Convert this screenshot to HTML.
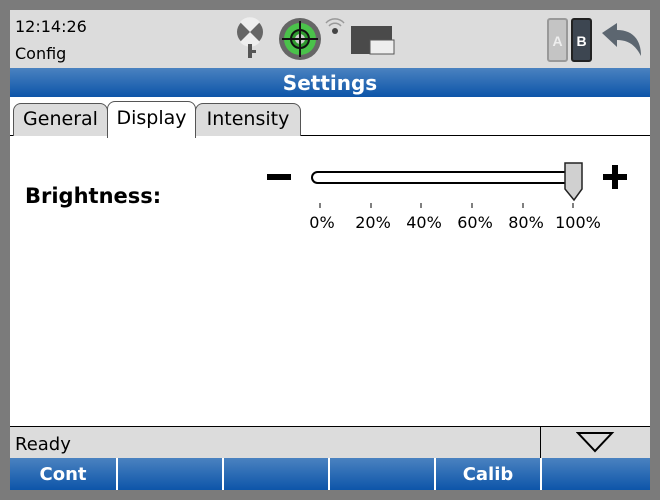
<!DOCTYPE html>
<html><head><style>
body{margin:0;width:660px;height:500px;background:#7b7b7b;position:relative;overflow:hidden;font-family:"DejaVu Sans","Liberation Sans",sans-serif}
.a{position:absolute}
.blue{background:linear-gradient(#4a82c0,#0d55a9)}
</style></head><body>
<div class="a" style="left:10px;top:10px;width:640px;height:480px;background:#fff"></div>
<div class="a" style="left:10px;top:10px;width:640px;height:58px;background:#dcdcdc"></div>
<div class="a" style="left:15px;top:17px;font-size:16px;color:#000">12:14:26</div>
<div class="a" style="left:15px;top:44px;font-size:16px;color:#000">Config</div>
<svg class="a" style="left:230px;top:14px" width="170" height="50">
<circle cx="20" cy="18" r="13" fill="#666"/><path d="M20 18 L10 8 A13 13 0 0 1 30 8 Z M20 18 L10 28 A13 13 0 0 0 30 28Z" fill="#eee"/>
<rect x="18" y="30" width="4" height="14" fill="#555"/><rect x="22" y="36" width="4" height="3" fill="#555"/>
<circle cx="70" cy="25" r="21" fill="#666"/><circle cx="70" cy="25" r="16" fill="#4ac24a"/><circle cx="70" cy="25" r="9" fill="#2f9a2f" stroke="#111" stroke-width="2"/><circle cx="70" cy="25" r="5" fill="#ccc"/>
<path d="M70 7V43M52 25H88" stroke="#111" stroke-width="2"/>
<circle cx="105" cy="17" r="3" fill="#444"/><path d="M99 12a8 8 0 0 1 12 0M96 9a12 12 0 0 1 18 0" stroke="#999" fill="none" stroke-width="1.5"/>
<rect x="121" y="12" width="41" height="28" fill="#4a4a4a"/><rect x="140" y="26" width="24" height="14" fill="#eee" stroke="#555"/>
</svg>
<svg class="a" style="left:545px;top:16px" width="100" height="48">
<rect x="3" y="3" width="19" height="42" rx="2" fill="#c4c4c4" stroke="#999" stroke-width="2"/><text x="12.5" y="30" font-size="14" fill="#eee" text-anchor="middle" font-family="Liberation Sans" font-weight="bold">A</text>
<rect x="27" y="3" width="19" height="42" rx="2" fill="#3d4651" stroke="#222" stroke-width="2"/><text x="36.5" y="30" font-size="14" fill="#fff" text-anchor="middle" font-family="Liberation Sans" font-weight="bold">B</text>
<path d="M57 17 L72 7 L72 14 C88 14 96 24 96 40 C90 28 82 24 72 24 L72 31 Z" fill="#5c6670"/>
</svg>
<div class="a blue" style="left:10px;top:68px;width:640px;height:29px"></div>
<div class="a" style="left:10px;top:71px;width:640px;text-align:center;color:#fff;font-weight:bold;font-size:20px;font-family:'DejaVu Sans',sans-serif">Settings</div>
<div class="a" style="left:10px;top:135px;width:640px;height:1px;background:#000"></div>
<div class="a" style="left:13px;top:103px;width:93px;height:32px;background:#dcdcdc;border:1px solid #555;border-bottom:none;border-radius:8px 8px 0 0;font-size:19px;text-align:center;line-height:31px">General</div>
<div class="a" style="left:195px;top:103px;width:104px;height:32px;background:#dcdcdc;border:1px solid #555;border-bottom:none;border-radius:8px 8px 0 0;font-size:19px;text-align:center;line-height:31px">Intensity</div>
<div class="a" style="left:107px;top:101px;width:87px;height:36px;background:#fff;border:1px solid #555;border-bottom:none;border-radius:8px 8px 0 0;font-size:19px;text-align:center;line-height:33px">Display</div>
<div class="a" style="left:25px;top:184px;font-size:21px;font-weight:bold">Brightness:</div>
<svg class="a" style="left:260px;top:155px" width="380" height="80">
<rect x="7" y="19" width="24" height="6" fill="#000"/>
<rect x="52" y="17" width="266" height="11" rx="5.5" fill="#fff" stroke="#000" stroke-width="2"/>
<path d="M305 8 H322 V34 L314 45 L305 34 Z" fill="#d0d0d0" stroke="#222" stroke-width="1.5"/>
<rect x="343" y="19" width="24" height="6" fill="#000"/><rect x="352" y="10" width="6" height="24" fill="#000"/>
<g stroke="#000"><path d="M60 48v5M111 48v5M161 48v5M212 48v5M263 48v5M313 48v5"/></g>
<g font-size="16" text-anchor="middle" font-family="DejaVu Sans"><text x="62" y="73">0%</text><text x="113" y="73">20%</text><text x="164" y="73">40%</text><text x="215" y="73">60%</text><text x="266" y="73">80%</text><text x="318" y="73">100%</text></g>
</svg>
<div class="a" style="left:10px;top:426px;width:640px;height:32px;background:#dcdcdc;border-top:1px solid #000"></div>
<div class="a" style="left:540px;top:427px;width:1px;height:31px;background:#000"></div>
<div class="a" style="left:15px;top:434px;font-size:18px">Ready</div>
<svg class="a" style="left:576px;top:431px" width="40" height="24"><path d="M2 2H36L19 20Z" fill="none" stroke="#000" stroke-width="2"/></svg>
<div class="a blue" style="left:10px;top:458px;width:640px;height:32px"></div>
<div class="a" style="left:116px;top:458px;width:2px;height:32px;background:#fff"></div>
<div class="a" style="left:222px;top:458px;width:2px;height:32px;background:#fff"></div>
<div class="a" style="left:328px;top:458px;width:2px;height:32px;background:#fff"></div>
<div class="a" style="left:434px;top:458px;width:2px;height:32px;background:#fff"></div>
<div class="a" style="left:540px;top:458px;width:2px;height:32px;background:#fff"></div>
<div class="a" style="left:10px;top:464px;width:106px;text-align:center;color:#fff;font-weight:bold;font-size:18px">Cont</div>
<div class="a" style="left:436px;top:464px;width:104px;text-align:center;color:#fff;font-weight:bold;font-size:18px">Calib</div>
</body></html>
